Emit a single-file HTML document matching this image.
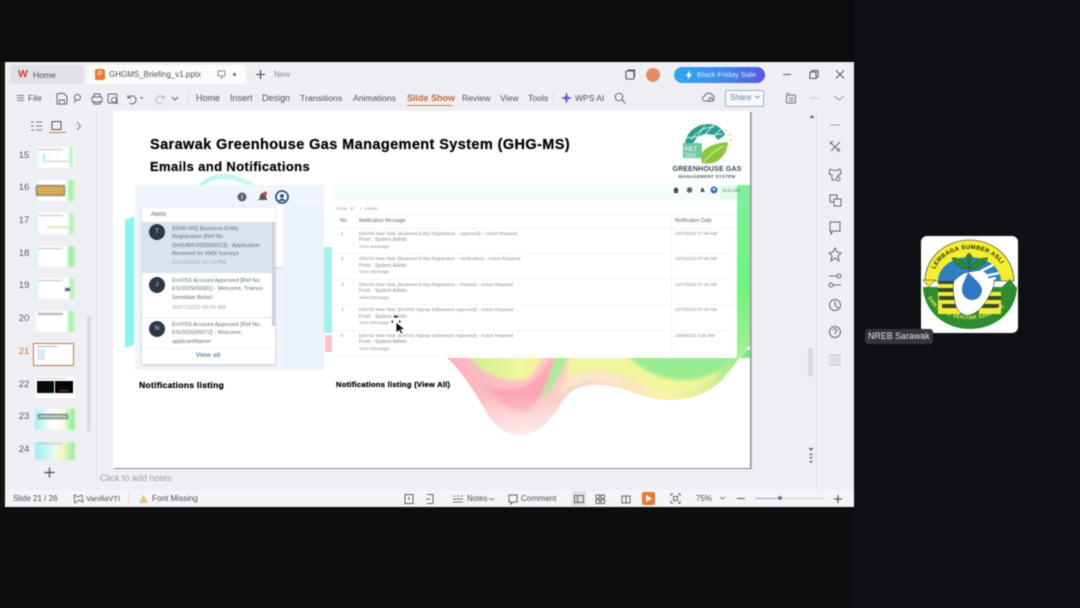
<!DOCTYPE html>
<html><head><meta charset="utf-8"><style>
html,body{margin:0;padding:0;background:#0e0f12;width:1080px;height:608px;overflow:hidden}
body{font-family:"Liberation Sans",sans-serif;position:relative}
#w{position:absolute;left:0;top:0;width:1080px;height:608px;filter:blur(.45px)}
.a,.t,.c{position:absolute}
.t{white-space:nowrap;line-height:10px;height:10px;color:#505056;font-size:9px}
.c{white-space:nowrap;line-height:10px;height:10px;color:#5a5a60;font-size:9px;transform:translateX(-50%)}
.m{font-size:4.500px;color:#86898f;line-height:6px;height:6px;filter:blur(.25px)}
.f{font-size:5px}
.l{color:#8a9cab;font-size:4.700px}
.d{font-size:4.700px}
.n{font-size:5.650px;line-height:8px;height:8px;color:#666b73;filter:blur(.2px)}
.b{font-weight:bold;color:#050505;-webkit-text-stroke:.25px #050505}
svg{position:absolute;overflow:visible}
.th{position:absolute;left:35px;width:40px;height:21px;background:#fff;overflow:hidden}
.th i{position:absolute;display:block}
</style></head><body><div id="w">
<div class="a" style="left:0;top:0;width:1080px;height:62px;background:#0b0b0d"></div>
<div class="a" style="left:0;top:507px;width:855px;height:101px;background:#0d0d0f"></div>
<div class="a" style="left:0;top:62px;width:5px;height:445px;background:#17130f"></div>
<div class="a" style="left:854px;top:0;width:226px;height:608px;background:#0f1014"></div>
<div class="a" style="left:5px;top:62px;width:849px;height:445px;background:#efeff3"></div>
<div class="a" style="left:5px;top:490px;width:849px;height:17px;background:#f4f4f7"></div>
<div class="a" style="left:96px;top:110px;width:1px;height:380px;background:#e6e6ea"></div>
<div class="a" style="left:816px;top:110px;width:1px;height:380px;background:#e3e3e8"></div>

<div class="a" style="left:10px;top:65px;width:74px;height:19px;background:#e1e1e5;border-radius:4px"></div>
<div class="a" style="left:87px;top:65px;width:159px;height:19px;background:#fbfbfc;border-radius:4px"></div>
<div class="t" style="left:18px;top:69px;color:#d33c3c;font-weight:bold;font-size:10.500px">W</div>
<div class="t" style="left:33px;top:70px;font-size:8.500px">Home</div>
<div class="a" style="left:95px;top:69px;width:10px;height:11px;background:#e8792c;border-radius:2px;color:#fff;font-size:7px;line-height:11px;text-align:center">P</div>
<div class="t" style="left:109px;top:70px;font-size:8.000px">GHGMS_Briefing_v1.pptx</div>
<svg style="left:217px;top:70px" width="9" height="9" viewBox="0 0 9 9" fill="none" stroke="#888"><rect x="1" y="1" width="7" height="5" rx="1"/><path d="M3 8h3"/></svg>
<div class="a" style="left:233px;top:73px;width:3px;height:3px;background:#666;border-radius:50%"></div>
<svg style="left:255px;top:69px" width="11" height="11" viewBox="0 0 11 11" stroke="#444" stroke-width="1.100"><path d="M5.500 1v9M1 5.500h9"/></svg>
<div class="t" style="left:274px;top:70px;font-size:8px;color:#8a8a90">New</div>
<svg style="left:625px;top:69px" width="11" height="11" viewBox="0 0 11 11" fill="none" stroke="#555" stroke-width="1.100"><rect x="1" y="2" width="8" height="8" rx="1"/><path d="M3 1h6.500v7"/></svg>
<div class="a" style="left:646px;top:68px;width:14px;height:14px;border-radius:50%;background:#e48d63"></div>
<div class="a" style="left:674px;top:67px;width:91px;height:16px;border-radius:8px;background:linear-gradient(90deg,#2fa9f1,#3e8be8 55%,#5b55dd)"></div>
<svg style="left:685px;top:70px" width="8" height="10" viewBox="0 0 8 10" fill="#fff"><path d="M5 0L1 6h2.500L2.500 10 7 4H4.300z"/></svg>
<div class="t" style="left:697px;top:70px;font-size:7.600px;color:#dbe7fb">Black Friday Sale</div>
<svg style="left:782px;top:69px" width="64" height="11" viewBox="0 0 64 11" fill="none" stroke="#555"><path d="M1 5.500h8"/><rect x="28" y="3" width="6" height="6.500"/><path d="M30 3V1.500h6V8h-2"/><path d="M54 1.500l8 8M62 1.500l-8 8"/></svg>

<!-- ribbon -->
<svg style="left:17px;top:94px" width="8" height="8" stroke="#777"><path d="M0 1.500h7M0 4h7M0 6.500h7"/></svg>
<div class="t" style="left:28px;top:93px;font-size:8.500px">File</div>
<div class="a" style="left:50px;top:92px;width:1px;height:12px;background:#ddd"></div>
<svg style="left:56px;top:92px" width="130" height="13" viewBox="0 0 130 13" fill="none" stroke="#666"><path d="M1 2.500q0-1 1-1h6l3 3v6.500q0 1-1 1H2q-1 0-1-1zM3.500 11V8h5v3"/><path d="M18 11l2-3a3 3 0 1 1 3 0h-3"/><rect x="36" y="5" width="10" height="5" rx="1"/><path d="M38 5V2h6v3M38 9v3h6V9"/><rect x="52" y="2" width="9" height="9" rx="1"/><circle cx="58" cy="8" r="2.500"/><path d="M60 10l2 2"/><path d="M72 3v3h3M72.500 6a4 4 0 1 1 1 5"/><path d="M84 5l1.500 1.500L87 5" stroke-width=".8"/><path d="M108 3v3h-3M107.500 6a4 4 0 1 0-1 5" stroke="#bbb"/><path d="M116 5l3 3 3-3"/></svg>
<div class="a" style="left:188px;top:92px;width:1px;height:12px;background:#ddd"></div>
<div class="t" style="left:196px;top:93px">Home</div>
<div class="t" style="left:230px;top:93px">Insert</div>
<div class="t" style="left:262px;top:93px">Design</div>
<div class="t" style="left:300px;top:93px;font-size:8.700px">Transitions</div>
<div class="t" style="left:353px;top:93px;font-size:8.700px">Animations</div>
<div class="t" style="left:407px;top:93px;font-weight:bold;color:#c26a3a">Slide Show</div>
<div class="a" style="left:407px;top:105px;width:45px;height:1px;background:#cf7c4c"></div>
<div class="t" style="left:462px;top:93px;font-size:8.700px">Review</div>
<div class="t" style="left:500px;top:93px;font-size:8.700px">View</div>
<div class="t" style="left:528px;top:93px;font-size:8.700px">Tools</div>
<div class="a" style="left:553px;top:92px;width:1px;height:12px;background:#ddd"></div>
<svg style="left:561px;top:92px" width="11" height="12" viewBox="0 0 11 12"><path d="M5.500 0L7 4.500 11 6 7 7.500 5.500 12 4 7.500 0 6 4 4.500z" fill="#7a5be0"/></svg>
<div class="t" style="left:575px;top:93px;font-size:8.500px">WPS AI</div>
<svg style="left:614px;top:92px" width="12" height="12" fill="none" stroke="#666"><circle cx="5" cy="5" r="3.800"/><path d="M8 8l3.500 3.500"/></svg>
<svg style="left:702px;top:92px" width="13" height="11" viewBox="0 0 13 11" fill="none" stroke="#666"><path d="M3 9a2.500 2.500 0 0 1 0-5 4 4 0 0 1 7.500-.5A3 3 0 0 1 10 9z"/><circle cx="8.500" cy="7.500" r="1.800" fill="#f1f1f4"/></svg>
<div class="a" style="left:725px;top:90px;width:37px;height:15px;border:1px solid #9db4c6;border-radius:1px;background:#f7f8fa"></div>
<div class="t" style="left:730px;top:93px;font-size:8px;color:#5b88aa">Share</div>
<svg style="left:755px;top:96px" width="5" height="4" fill="none" stroke="#888"><path d="M0 0l2.500 2L5 0"/></svg>
<svg style="left:785px;top:92px" width="60" height="12" viewBox="0 0 60 12" fill="none" stroke="#777"><rect x="1.500" y="3" width="9" height="8" rx="1"/><path d="M1 1.500h3M4 6h5M4 8.500h5"/><path d="M26 6h1M29 6h1M32 6h1"/><path d="M49 4l5 4 5-4" stroke="#999"/></svg>

<!-- left panel -->
<svg style="left:31px;top:120px" width="55" height="12" viewBox="0 0 55 12" fill="none" stroke="#777"><path d="M0 2h3M0 6h3M0 10h3M5 2h6M5 6h6M5 10h6"/><rect x="21" y="1.500" width="9" height="8" stroke="#555"/><path d="M46 2l3.500 4L46 10" stroke="#888"/></svg>
<div class="a" style="left:49px;top:132px;width:17px;height:1px;background:#cf7c4c"></div>
<div class="c" style="left:24px;top:151px;font-size:9.500px">15</div>
<div class="c" style="left:24px;top:183px;font-size:9.500px">16</div>
<div class="c" style="left:24px;top:216px;font-size:9.500px">17</div>
<div class="c" style="left:24px;top:249px;font-size:9.500px">18</div>
<div class="c" style="left:24px;top:281px;font-size:9.500px">19</div>
<div class="c" style="left:24px;top:314px;font-size:9.500px">20</div>
<div class="c" style="left:24px;top:347px;font-size:9.500px;color:#c27a4a">21</div>
<div class="c" style="left:24px;top:380px;font-size:9.500px">22</div>
<div class="c" style="left:24px;top:412px;font-size:9.500px">23</div>
<div class="c" style="left:24px;top:445px;font-size:9.500px">24</div>

<div class="th" style="top:147px;background:linear-gradient(90deg,#d8f6f4 0,#fbfefe 14%,#fff 82%,#b8f2c4 90%,#fff 100%);filter:blur(.5px)"><i style="left:3px;top:2px;width:25px;height:1px;background:#bbb"></i><i style="left:8px;top:14px;width:26px;height:1px;background:#c4c4c4"></i><i style="left:8px;top:7px;width:2px;height:6px;background:#a8e8ea"></i></div>
<div class="th" style="top:180px;background:linear-gradient(90deg,#d8f6f4 0,#fff 12%,#fff 76%,#9cf0aa 88%,#d4f6c8 100%);filter:blur(.4px)"><i style="left:1px;top:5px;width:27px;height:9px;background:#d9aa58;border:1px solid #666;border-radius:1px"></i></div>
<div class="th" style="top:213px;background:linear-gradient(90deg,#c8f6f4 0,#fff 14%,#fff 80%,#acf0b0 90%,#e0f8d0 100%);filter:blur(.5px)"><i style="left:3px;top:2px;width:25px;height:1px;background:#bbb"></i><i style="left:12px;top:13px;width:22px;height:2px;background:#e7e79b"></i></div>
<div class="th" style="top:246px;background:linear-gradient(90deg,#c8f6f4 0,#fff 14%,#fff 78%,#94f0a4 88%,#c8f4b8 100%);filter:blur(.5px)"><i style="left:3px;top:2px;width:25px;height:1px;background:#bbb"></i></div>
<div class="th" style="top:278px;background:linear-gradient(90deg,#c8f6f4 0,#fff 14%,#fff 82%,#aaf0b0 92%,#dcf8cc 100%);filter:blur(.5px)"><i style="left:3px;top:2px;width:25px;height:1px;background:#bbb"></i><i style="left:30px;top:10px;width:5px;height:3px;background:#556"></i></div>
<div class="th" style="top:311px;background:linear-gradient(90deg,#e8faf8 0,#fff 12%,#fff 78%,#a0f0ac 88%,#d0f6c0 100%);filter:blur(.5px)"><i style="left:3px;top:2px;width:25px;height:2px;background:#aaa"></i></div>
<div class="a" style="left:33px;top:343px;width:39px;height:21px;background:#fff;border:1.500px solid #b57b4c;border-radius:1px"></div>
<div class="a" style="left:37px;top:349px;width:8px;height:11px;background:#dbe8f5"></div>
<div class="a" style="left:37px;top:346px;width:20px;height:1px;background:#aaa"></div>
<div class="th" style="top:377px"><i style="left:2px;top:4px;width:17px;height:12px;background:#050a0a"></i><i style="left:20px;top:4px;width:18px;height:12px;background:#050505"></i><i style="left:1px;top:1px;width:30px;height:1px;background:#ccc"></i><i style="left:24px;top:13px;width:10px;height:1px;background:#a33"></i></div>
<div class="th" style="top:409px;background:linear-gradient(90deg,#a8eef4 0,#d8f8f4 22%,#fff 45%,#fafbe0 72%,#9cf0a4 92%);filter:blur(.4px)"><i style="left:3px;top:5px;width:28px;height:3px;background:#b0d6c0;border:1px solid #555;border-radius:1px"></i></div>
<div class="th" style="top:442px;background:linear-gradient(90deg,#a0eef4 0,#c8f6f4 30%,#eefaf0 50%,#f4f6c0 70%,#a8f0ac 92%);height:18px;filter:blur(.5px)"><i style="left:3px;top:1px;width:24px;height:1px;background:#bbb"></i></div>
<div class="a" style="left:87px;top:316px;width:4px;height:116px;background:#dcdce0;border-radius:2px"></div>
<svg style="left:44px;top:467px" width="11" height="11" stroke="#444" stroke-width="1.200"><path d="M5.500 .5v10M.5 5.500h10"/></svg>

<!-- slide -->
<div class="a" style="left:113px;top:111px;width:637px;height:357px;background:#fff;box-shadow:1px 1px 0 #8d8d8d,2px 1px 0 #bbb"></div>
<svg class="a" style="left:0;top:0" width="1080" height="608" viewBox="0 0 1080 608">
<defs>
<linearGradient id="g1" x1="445" y1="0" x2="750" y2="0" gradientUnits="userSpaceOnUse"><stop offset="0" stop-color="#fbb4be"/><stop offset=".3" stop-color="#fcc4c6"/><stop offset=".52" stop-color="#fddcc8"/><stop offset=".72" stop-color="#f9f5a8"/><stop offset=".88" stop-color="#dcec98"/><stop offset="1" stop-color="#70ec8c"/></linearGradient>
<linearGradient id="g3" x1="0" y1="185" x2="0" y2="360" gradientUnits="userSpaceOnUse"><stop offset="0" stop-color="#7df0a0"/><stop offset=".6" stop-color="#6ef57e"/><stop offset="1" stop-color="#a8ee90"/></linearGradient>
<linearGradient id="g4" x1="125" y1="0" x2="240" y2="0" gradientUnits="userSpaceOnUse"><stop offset="0" stop-color="#8ef4f2"/><stop offset="1" stop-color="#c8f8f2"/></linearGradient>
<linearGradient id="g5" x1="465" y1="0" x2="555" y2="0" gradientUnits="userSpaceOnUse"><stop offset="0" stop-color="#c4f090"/><stop offset=".6" stop-color="#f2f69c"/><stop offset="1" stop-color="#f6f09e"/></linearGradient>
<linearGradient id="g6" x1="0" y1="395" x2="0" y2="436" gradientUnits="userSpaceOnUse"><stop offset="0" stop-color="#fff" stop-opacity="0"/><stop offset="1" stop-color="#fff" stop-opacity=".7"/></linearGradient>
<clipPath id="cw"><path d="M447 358C462 372 475 392 490 418C500 430 511 436 522 435C540 432 552 420 562 402C574 382 600 380 635 393C665 405 700 402 722 380L750 345V358Z"/></clipPath>
<filter id="bl" x="-20%" y="-20%" width="140%" height="140%"><feGaussianBlur stdDeviation="1.800"/></filter>
</defs>
<path d="M125 220L134 216V345L125 348Z" fill="#8af5f0"/>
<path d="M195 190C205 174 225 170 240 177C250 181 258 186 262 190Z" fill="url(#g4)"/>
<path d="M205 185C212 178 226 176 245 185Z" fill="#fff"/>
<path d="M324 247H332V333H324Z" fill="#a0f2ec"/>
<path d="M325 335H332V352H325Z" fill="#f8c2cb"/>
<g clip-path="url(#cw)">
<rect x="437" y="350" width="313" height="90" fill="url(#g1)"/>
<g filter="url(#bl)">
<path d="M463 350C478 372 503 386 530 378L548 350Z" fill="url(#g5)"/>
<path d="M484 385C507 394 525 390 540 375L556 350H562C552 375 542 395 528 412C512 415 497 400 484 385Z" fill="#fba6b2"/>
<path d="M556 350H570C562 372 552 390 540 402C548 385 552 368 556 350Z" fill="#a8ee98"/>
<path d="M570 350H730L718 372C695 396 670 394 640 382C610 368 585 368 566 380Z" fill="#f0f69c"/>
<path d="M618 350H735L724 368C700 384 670 384 645 370Z" fill="#98ec90"/>
<path d="M560 396C575 380 600 378 625 386L618 376C596 368 575 372 562 385Z" fill="#fce6cc"/>
</g>
<rect x="437" y="395" width="160" height="45" fill="url(#g6)"/>
</g>
<path d="M735 185H750V345L737 360H735Z" fill="url(#g3)"/>
</svg>

<div class="t b" style="left:150px;top:140px;font-size:14.500px;letter-spacing:.4px">Sarawak Greenhouse Gas Management System (GHG-MS)</div>
<div class="t b" style="left:150px;top:162px;font-size:13px;letter-spacing:.38px">Emails and Notifications</div>

<!-- GHG logo -->
<svg style="left:672px;top:122px" width="72" height="46" viewBox="0 0 72 46" fill="none">
<path d="M13 22C14 9 26 2 36 2C45 2 51 7 53 13L46 18C42 11 32 10 25 16C22 19 21 21 21 24L13 24Z" fill="#2a9d8f"/>
<path d="M19 18C24 10 32 5 42 5M25 16L33 3M33 12L42 3M42 14L49 7M14 16L50 12" stroke="#d4efe8" stroke-width=".9"/>
<rect x="11" y="21" width="19" height="15" fill="#6dc6a5"/>
<path d="M30 41C26 30 34 22 56 20C55 34 45 44 30 41Z" fill="#8cc63f"/>
<path d="M32 40C38 32 44 28 52 24" stroke="#d7ef9c"/>
<circle cx="54" cy="9" r="1" fill="#e2c96a"/><circle cx="58" cy="13" r="1" fill="#e2c96a"/><circle cx="59" cy="18" r="1" fill="#b8d86a"/>
<text x="12.500" y="29" font-family="Liberation Sans" font-size="6.500" fill="#fff">NET</text>
<text x="13" y="35" font-family="Liberation Sans" font-size="5" fill="#fff">2050</text>
</svg>
<div class="c" style="left:707px;top:165px;font-size:7px;font-weight:bold;color:#33484f;letter-spacing:.15px">GREENHOUSE GAS</div>
<div class="c" style="left:707px;top:172px;font-size:4.500px;font-weight:bold;color:#4a5a62;letter-spacing:.25px">MANAGEMENT SYSTEM</div>

<!-- Alerts -->
<div class="a" style="left:135px;top:185px;width:189px;height:185px;background:#f0f4fb"></div>
<div class="a" style="left:275px;top:205px;width:8px;height:62px;background:#fff;box-shadow:0 1px 2px #ccc"></div>
<div class="a" style="left:283px;top:205px;width:41px;height:165px;background:#ecf2fa"></div>
<div class="a" style="left:142px;top:208px;width:133px;height:156px;background:#fff;box-shadow:0 1px 3px rgba(0,0,0,.2)"></div>
<div class="a" style="left:142px;top:222px;width:130px;height:51px;background:#d8e3ef"></div>
<div class="a" style="left:272px;top:222px;width:3px;height:104px;background:#ccd0d7"></div>
<div class="a" style="left:142px;top:317px;width:130px;height:1px;background:#e4e4e8"></div>
<div class="a" style="left:142px;top:348px;width:133px;height:1px;background:#eee"></div>
<svg style="left:237px;top:191px" width="55" height="13" viewBox="0 0 55 13"><circle cx="5" cy="6" r="4.500" fill="#5e636b"/><path d="M5 4v4" stroke="#eee"/><path d="M21 9q2-1 2-4a3 3 0 0 1 6 0q0 3 2 4z" fill="#694a5c"/><circle cx="28" cy="2.500" r="2" fill="#d9435a"/><circle cx="45" cy="6" r="6" fill="#fff" stroke="#2e5b7e" stroke-width="1.800"/><circle cx="45" cy="5" r="2" fill="#2e5b7e"/><path d="M41 10q4-5 8 0" fill="#2e5b7e"/></svg>
<div class="t" style="left:151px;top:210px;font-size:6px;color:#555">Alerts</div>
<div class="a" style="left:149px;top:224px;width:16px;height:16px;border-radius:50%;background:#2a3848;color:#dde;font-size:6px;line-height:16px;text-align:center">T</div>
<div class="a" style="left:149px;top:277px;width:16px;height:16px;border-radius:50%;background:#2a3848;color:#dde;font-size:6px;line-height:16px;text-align:center">J</div>
<div class="a" style="left:149px;top:321px;width:16px;height:16px;border-radius:50%;background:#2a3848;color:#dde;font-size:6px;line-height:16px;text-align:center">N</div>
<div class="t n" style="left:172px;top:225px">[GHG-MS] Business Entity</div>
<div class="t n" style="left:172px;top:233px">Registration [Ref No.</div>
<div class="t n" style="left:172px;top:242px">GHG/BR/2025/00023] - Application</div>
<div class="t n" style="left:172px;top:250px">Received for KKN Surveys</div>
<div class="t n" style="left:172px;top:259px;color:#9aa6b3">21/10/2025 02:19 PM</div>
<div class="t n" style="left:172px;top:277px">EnVISS Account Approved [Ref No.</div>
<div class="t n" style="left:172px;top:285px">ES/2025/00081] - Welcome, Trainee</div>
<div class="t n" style="left:172px;top:294px">Sembilan Belas!</div>
<div class="t n" style="left:172px;top:304px;color:#a5a8ae">30/07/2025 09:09 AM</div>
<div class="t n" style="left:172px;top:321px">EnVISS Account Approved [Ref No.</div>
<div class="t n" style="left:172px;top:329px">ES/2025/00072] - Welcome,</div>
<div class="t n" style="left:172px;top:338px">applicantName!</div>
<div class="c" style="left:208px;top:352px;font-size:6.800px;line-height:8px;height:8px;font-weight:bold;color:#6c8da8">View all</div>
<div class="t b" style="left:139px;top:380px;font-size:8.600px;letter-spacing:.25px">Notifications listing</div>

<!-- table -->
<div class="a" style="left:333px;top:185px;width:404px;height:172px;background:#fff"></div>
<div class="a" style="left:333px;top:185px;width:390px;height:15px;background:#f6fcfa"></div>
<div class="a" style="left:720px;top:185px;width:17px;height:15px;background:#e4fbec"></div>
<svg style="left:673px;top:186px" width="48" height="9" viewBox="0 0 48 9"><path d="M3 1L6 4H5V7H1V4H0Z" fill="#444"/><circle cx="16.500" cy="4" r="2.800" fill="#666"/><path d="M27 6q1-.5 1-2.500a1.500 1.500 0 0 1 3 0q0 2 1 2.500z" fill="#555"/><circle cx="41" cy="4" r="3.500" fill="#2c78b9"/><circle cx="41" cy="3.300" r="1.200" fill="#fff"/></svg>
<div class="t" style="left:722px;top:186px;font-size:4.500px;color:#777">GHG-MS</div>
<div class="t" style="left:336px;top:204px;font-size:4.500px;color:#9a9ea5">Show &nbsp;10 &nbsp;&nbsp;&nbsp;v &nbsp;entries</div>
<div class="a" style="left:335px;top:214px;width:400px;height:1px;background:#f5f5f6"></div>
<div class="a" style="left:671px;top:214px;width:1px;height:143px;background:#f2f2f4"></div>
<div class="t" style="left:340px;top:216px;font-size:5px;color:#666">No.</div>
<div class="t" style="left:359px;top:216px;font-size:5px;color:#666">Notification Message</div>
<div class="t" style="left:675px;top:216px;font-size:5px;color:#666">Notification Date</div>
<div class="a" style="left:335px;top:228px;width:400px;height:1px;background:#f2f2f4"></div>
<div class="a" style="left:335px;top:253px;width:400px;height:1px;background:#f5f5f6"></div>
<div class="a" style="left:335px;top:279px;width:400px;height:1px;background:#f5f5f6"></div>
<div class="a" style="left:335px;top:304px;width:400px;height:1px;background:#f5f5f6"></div>
<div class="a" style="left:335px;top:330px;width:400px;height:1px;background:#f5f5f6"></div>
<div class="a" style="left:335px;top:355px;width:400px;height:1px;background:#f5f5f6"></div>

<div class="t m" style="left:341px;top:231px">1</div><div class="t m" style="left:359px;top:231px">EMVSS New Task: [Business Entity Registration – Approved] – Action Required</div><div class="t m f" style="left:359px;top:237px">From : System Admin</div><div class="t m l" style="left:359px;top:244px">View Message</div><div class="t m d" style="left:675px;top:231px">10/7/2025 07:49 AM</div>
<div class="t m" style="left:341px;top:256px">2</div><div class="t m" style="left:359px;top:256px">EMVSS New Task: [Business Entity Registration – Verification] – Action Required</div><div class="t m f" style="left:359px;top:263px">From : System Admin</div><div class="t m l" style="left:359px;top:269px">View Message</div><div class="t m d" style="left:675px;top:256px">10/7/2025 07:49 AM</div>
<div class="t m" style="left:341px;top:282px">3</div><div class="t m" style="left:359px;top:282px">EMVSS New Task: [Business Entity Registration – Review] – Action Required</div><div class="t m f" style="left:359px;top:288px">From : System Admin</div><div class="t m l" style="left:359px;top:295px">View Message</div><div class="t m d" style="left:675px;top:282px">10/7/2025 07:49 AM</div>
<div class="t m" style="left:341px;top:307px">4</div><div class="t m" style="left:359px;top:307px">EMVSS New Task: [EnVISS Signup Submission Approved] – Action Required</div><div class="t m f" style="left:359px;top:314px">From : System Admin</div><div class="t m l" style="left:359px;top:320px">View Message</div><div class="t m d" style="left:675px;top:307px">10/7/2025 07:34 AM</div>
<div class="t m" style="left:341px;top:333px">5</div><div class="t m" style="left:359px;top:333px">EMVSS New Task: [EnVISS Signup Submission Approved] – Action Required</div><div class="t m f" style="left:359px;top:339px">From : System Admin</div><div class="t m l" style="left:359px;top:346px">View Message</div><div class="t m d" style="left:675px;top:333px">10/6/2025 3:56 PM</div>

<div class="t b" style="left:336px;top:380px;font-size:7.600px;letter-spacing:.25px">Notifications listing (View All)</div>
<svg style="left:390px;top:314px" width="18" height="20" viewBox="0 0 18 20"><path d="M6 8V19L9 16.500 11 20 13 19 11 15.500H15Z" fill="#111" stroke="#fff" stroke-width=".8"/><path d="M6 1L8 3.500H4ZM1 7.500L3 6V9ZM11 7.500L9 6V9Z" fill="#111"/></svg>

<!-- right side scroll + icons -->
<svg style="left:809px;top:114px" width="6" height="6"><path d="M3 1L5.500 4H.5Z" fill="#666"/></svg>
<div class="a" style="left:808px;top:348px;width:5px;height:28px;background:#d9d9dd;border-radius:2px"></div>
<svg style="left:808px;top:447px" width="6" height="18" viewBox="0 0 6 18" fill="#666"><path d="M.5 1H5.500L3 4ZM1 8L3 6 5 8ZM1 10L3 12 5 10ZM1 14L3 16 5 14Z"/></svg>
<svg style="left:828px;top:120px" width="14" height="246" viewBox="0 0 14 246" fill="none" stroke="#66666c" stroke-width="1">
<path d="M2 5H12" stroke="#999"/>
<path d="M2 22L12 32M12 22L3 31M2 24L5 21M9 31L12 28"/>
<path d="M2 49Q7 52 12 49L13 54 10 55V57M2 49L1 54 4 55V60H7"/><circle cx="10" cy="59" r="2"/>
<rect x="2" y="75" width="7" height="7"/><rect x="6" y="79" width="7" height="7" fill="#efeff3"/>
<path d="M2 102H12V111H5L3 114V111H2Z"/>
<path d="M7 128L9 132 13 133 10 136 11 141 7 138 3 141 4 136 1 133 5 132Z"/>
<path d="M1 156H9M5 165H13"/><circle cx="11" cy="156" r="2"/><circle cx="3" cy="165" r="2"/>
<circle cx="7" cy="185" r="5.500"/><path d="M7 181V185L10 188"/>
<circle cx="7" cy="212" r="5.500"/><path d="M5 210.500Q7 207.500 9 210Q9 212 7 212.500V214"/>
<g stroke="#c4c4ca"><rect x="2" y="235" width="4" height="4"/><rect x="8" y="235" width="4" height="4"/><rect x="2" y="241" width="4" height="4"/><rect x="8" y="241" width="4" height="4"/></g>
</svg>

<!-- notes + status -->
<div class="t" style="left:100px;top:473px;font-size:9px;color:#a0a0a6">Click to add notes</div>
<div class="t" style="left:13px;top:494px;font-size:8px">Slide 21 / 26</div>
<svg style="left:73px;top:494px" width="11" height="10" fill="none" stroke="#777"><path d="M1 1L5 3 9 1 10 8 6 6 2 9Z"/></svg>
<div class="t" style="left:86px;top:494px;font-size:7.600px">VanillaVTI</div>
<div class="a" style="left:128px;top:492px;width:1px;height:12px;background:#e8dcdc"></div>
<svg style="left:139px;top:495px" width="9" height="8"><path d="M4.500 0L9 8H0Z" fill="#e9c47a"/></svg>
<div class="t" style="left:152px;top:494px;font-size:8.100px">Font Missing</div>
<svg style="left:403px;top:493px" width="32" height="12" viewBox="0 0 32 12" fill="none" stroke="#666"><rect x="2" y="1.500" width="8" height="9"/><path d="M6 4V7"/><path d="M24 1.500H30V10.500H24M23 6H27"/></svg>
<svg style="left:453px;top:494px" width="11" height="10" stroke="#777"><path d="M0 2H2M4 2H6M8 2H10M0 5H10M0 8H10"/></svg>
<div class="t" style="left:467px;top:494px;font-size:7.800px">Notes</div>
<svg style="left:489px;top:498px" width="5" height="3" fill="none" stroke="#777"><path d="M0 0L2.500 2 5 0"/></svg>
<svg style="left:508px;top:494px" width="10" height="10" fill="none" stroke="#666"><path d="M1 8V1H9V8H5L3 10V8Z"/></svg>
<div class="t" style="left:521px;top:494px;font-size:8.200px">Comment</div>
<div class="a" style="left:572px;top:491px;width:14px;height:15px;background:#dfdfe3"></div>
<svg style="left:574px;top:494px" width="60" height="11" viewBox="0 0 60 11" fill="none" stroke="#666"><rect x=".500" y="1.500" width="9" height="7"/><path d="M3.500 1.500V8.500"/><rect x="22" y="1" width="3.500" height="3.500"/><rect x="27" y="1" width="3.500" height="3.500"/><rect x="22" y="6" width="3.500" height="3.500"/><rect x="27" y="6" width="3.500" height="3.500"/><path d="M48 2H52V9H48ZM52 2H56V9H52"/></svg>
<div class="a" style="left:642px;top:492px;width:13px;height:13px;background:#e8792c;border-radius:2px"></div>
<svg style="left:646px;top:495px" width="6" height="7"><path d="M0 0L6 3.500 0 7Z" fill="#fff"/></svg>
<svg style="left:670px;top:493px" width="11" height="11" fill="none" stroke="#666"><path d="M1 3V1H3M8 1H10V3M10 8V10H8M3 10H1V8"/><rect x="3.500" y="3.500" width="4" height="4"/></svg>
<div class="t" style="left:696px;top:494px;font-size:8px">75%</div>
<svg style="left:720px;top:497px" width="5" height="3" fill="none" stroke="#777"><path d="M0 0L2.500 2 5 0"/></svg>
<div class="a" style="left:737px;top:498px;width:8px;height:1px;background:#555"></div>
<div class="a" style="left:755px;top:498px;width:70px;height:1px;background:#d5d5da"></div>
<div class="a" style="left:755px;top:498px;width:24px;height:1px;background:#8fb1d0"></div>
<div class="a" style="left:778px;top:496px;width:4px;height:4px;border-radius:50%;background:#777"></div>
<svg style="left:834px;top:495px" width="8" height="8" stroke="#444" stroke-width="1.100"><path d="M4 0V8M0 4H8"/></svg>

<!-- Participant tile -->
<svg style="left:921px;top:236px" width="97" height="97" viewBox="0 0 97 97">
<rect width="97" height="97" rx="6" fill="#fff"/>
<path d="M4 45A44.500 41 0 0 1 93 45Z" fill="#f5ee2e" stroke="#222" stroke-width=".6"/>
<path d="M17 45A31.500 24 0 0 1 80 45Z" fill="#2f7fc3"/>
<path d="M2 44H14L8 51Z" fill="#f5ee2e" stroke="#222" stroke-width=".5"/>
<path d="M95 51H81L89 43Z" fill="#2f8a33"/>
<path d="M2 51H96C95 76 74 93 49 93S3 76 2 51Z" fill="#2f8c2e"/>
<g><rect x="17" y="46" width="22" height="32" fill="#f1ec36"/><rect x="17" y="45" width="22" height="3" fill="#3a4a2a"/><rect x="17" y="52" width="22" height="4" fill="#3a4a2a"/><rect x="18" y="60" width="21" height="4" fill="#3a4a2a"/><rect x="21" y="68" width="18" height="4" fill="#3a4a2a"/><rect x="58" y="56" width="22" height="22" fill="#f1ec36"/><rect x="58" y="60" width="22" height="4" fill="#3a4a2a"/><rect x="58" y="68" width="20" height="4" fill="#3a4a2a"/></g>
<path d="M33 45C38 40 42 37 47 36L60 34C66 36 68 40 68 44L73 43C74 48 72 52 70 56C66 65 60 74 52 78C44 81 38 78 35 70C33 62 31 52 33 45Z" fill="#fff" stroke="#222" stroke-width=".5"/>
<path d="M47 36C44 44 41 48 41 54a10 10 0 0 0 20 0C61 48 52 42 47 36Z" fill="#2f78c4"/>
<path d="M48 36L48 20M48 33C40 33 34 29 31 22C40 21 45 27 48 33ZM48 33C56 33 63 29 67 22C58 21 51 27 48 33ZM48 28C44 24 44 20 48 17C52 20 52 24 48 28Z" fill="#2f8c2e" stroke="#1c5c1c" stroke-width=".6"/>
<path d="M60 35L72 29M64 40L78 37M66 44L75 42" stroke="#fff" stroke-width="2.400"/>
<defs><path id="ta" d="M12 43A36.500 30 0 0 1 85 43"/><path id="tb" d="M5 56A44 32 0 0 0 92 56"/></defs>
<text font-family="Liberation Sans" font-size="6" font-weight="bold" fill="#1c2a10" letter-spacing=".3"><textPath href="#ta" startOffset="10">LEMBAGA SUMBER ASLI</textPath></text>
<text font-family="Liberation Sans" font-size="5.400" font-weight="bold" fill="#e8e85a" letter-spacing=".2"><textPath href="#tb" startOffset="6">DAN ALAM SEKITAR SARAWAK</textPath></text>
</svg>
<div class="a" style="left:865px;top:329px;width:68px;height:15px;background:#34343a;border-radius:3px"></div>
<div class="t" style="left:868px;top:331px;font-size:8.900px;color:#e3e3e8">NREB Sarawak</div>
</div></body></html>
